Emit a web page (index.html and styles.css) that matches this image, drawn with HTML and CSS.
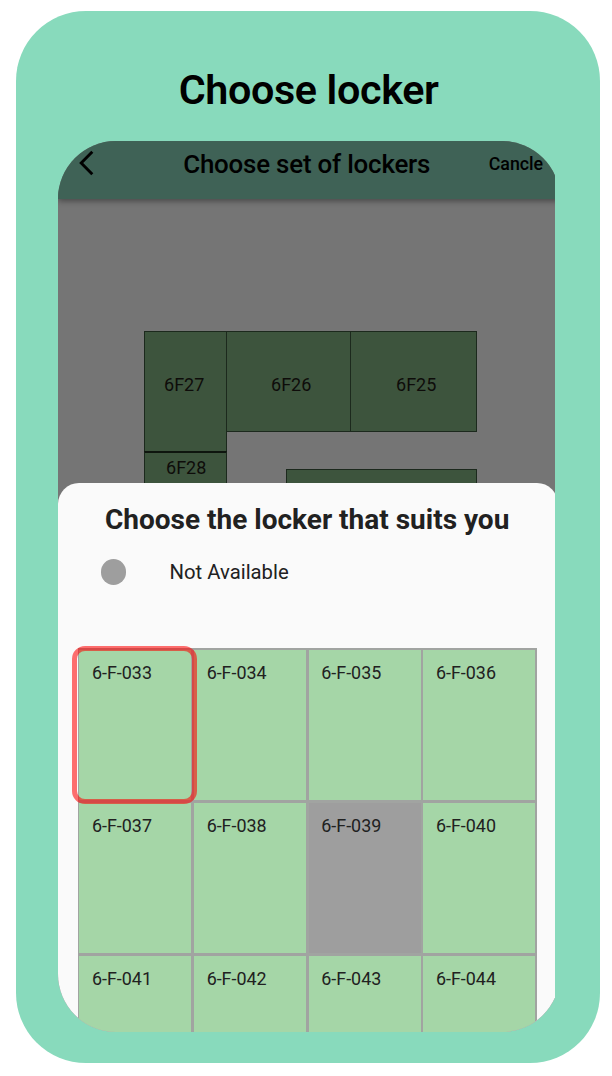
FILE: index.html
```html
<!DOCTYPE html>
<html lang="en">
<head>
<meta charset="utf-8">
<title>Choose locker</title>
<link rel="stylesheet" href="styles.css">
</head>
<body>
<main class="card">
  <h1 class="card-title">Choose locker</h1>
  <div class="viewport">
    <div class="screen">
      <header class="app-bar">
        <svg class="back" viewBox="0 0 18 26" aria-label="Back"><path d="M15.3 1.8 4.2 13l11.1 11.2" fill="none" stroke="#000" stroke-width="2.9"/></svg>
        <span class="app-title">Choose set of lockers</span>
        <span class="cancel">Cancle</span>
      </header>
      <section class="map">
        <div class="unit u27"><span>6F27</span></div>
        <div class="unit u26"><span>6F26</span></div>
        <div class="unit u25"><span>6F25</span></div>
        <div class="unit u28"><span>6F28</span></div>
        <div class="unit u29"></div>
      </section>
      <section class="sheet">
        <h2 class="sheet-title">Choose the locker that suits you</h2>
        <div class="legend"><i class="dot"></i><span>Not Available</span></div>
        <div class="lockers">
          <div class="locker selected"><span>6-F-033</span></div>
          <div class="locker"><span>6-F-034</span></div>
          <div class="locker"><span>6-F-035</span></div>
          <div class="locker"><span>6-F-036</span></div>
          <div class="locker"><span>6-F-037</span></div>
          <div class="locker"><span>6-F-038</span></div>
          <div class="locker taken"><span>6-F-039</span></div>
          <div class="locker"><span>6-F-040</span></div>
          <div class="locker"><span>6-F-041</span></div>
          <div class="locker"><span>6-F-042</span></div>
          <div class="locker"><span>6-F-043</span></div>
          <div class="locker"><span>6-F-044</span></div>
        </div>
      </section>
    </div>
  </div>
</main>
</body>
</html>
```
FILE: styles.css
```css
*, *::after { box-sizing: border-box; }
html { background: #fff; }
body {
  margin: 0;
  height: 1076px;
  padding: 11.4px 0 0 16.4px;
  overflow: hidden;
  font-family: Roboto, sans-serif;
  color: #000;
}
.card {
  width: 584px;
  height: 1051.3px;
  padding-left: 41.3px;
  border-radius: 70px;
  background: #88dabc;
}
.card-title {
  margin: 0;
  height: 129.2px;
  padding: 54px 0 0 121px;
  font-size: 41.3px;
  line-height: 50px;
  font-weight: 600;
  letter-spacing: -0.37px;
  white-space: nowrap;
}
.viewport {
  width: 497.3px;
  height: 891px;
  overflow: hidden;
}
.screen {
  display: flex;
  flex-direction: column;
  width: 502px;
  height: 891px;
  border-radius: 58px;
  overflow: hidden;
  background: #757575;
}
.app-bar {
  display: flex;
  flex: none;
  position: relative;
  z-index: 1;
  height: 58.2px;
  padding-top: 8.3px;
  background: #3f6256;
  box-shadow: 0 2px 6px rgba(0, 0, 0, .4);
  white-space: nowrap;
}
.back { flex: none; width: 18px; height: 26px; margin-left: 19px; margin-top: 1.2px; }
.app-title {
  width: 306px;
  padding-left: 88.5px;
  font-size: 25.9px;
  line-height: 30px;
  font-weight: 500;
  letter-spacing: -0.2px;
}
.cancel {
  padding-left: 88px;
  font-size: 17.8px;
  line-height: 29px;
  font-weight: 500;
}
.map {
  flex: none;
  position: relative;
  height: 284.3px;
}
.unit {
  position: absolute;
  display: flex;
  justify-content: center;
  border: 1px solid #1c291d;
  background: #3d543d;
  color: #0e0c0a;
  font-size: 18px;
  line-height: 22px;
}
.u27 { left: 86px; top: 132.3px; width: 83px; height: 121px; padding: 42px 2px 0 0; }
.u26 { left: 168px; top: 132.3px; width: 125px; height: 101px; padding: 42px 0 0 6px; }
.u25 { left: 292px; top: 132.3px; width: 127px; height: 101px; padding: 42px 0 0 6px; }
.u28 { left: 86px; top: 252.3px; width: 83px; height: 60px; padding: 4px 0 0 2px; border-top: 2px solid #0e150e; }
.u29 { left: 228px; top: 270.3px; width: 191px; height: 50px; }
.sheet {
  flex: none;
  position: relative;
  z-index: 2;
  width: 500.3px;
  height: 560px;
  padding-left: 20.3px;
  border-radius: 21px 21px 0 0;
  background: #fafafa;
  color: #212121;
}
.sheet-title {
  margin: 0;
  padding: 20px 0 0 27px;
  font-size: 28px;
  line-height: 34px;
  font-weight: 700;
  white-space: nowrap;
}
.legend {
  display: flex;
  align-items: center;
  height: 26px;
  margin-top: 22px;
  padding-left: 22.7px;
  gap: 43.3px;
  font-size: 20.3px;
}
.dot { width: 25.6px; height: 25.6px; border-radius: 50%; background: #9e9e9e; }
.lockers {
  display: grid;
  grid-template-columns: repeat(4, 112px);
  grid-auto-rows: 150px;
  gap: 3px 2.67px;
  width: 458.7px;
  margin-top: 63.4px;
  padding: 1.3px;
  background: #a1a4a1;
}
.locker {
  position: relative;
  padding: 11.3px 0 0 12.7px;
  background: #a5d6a7;
  font-size: 17.9px;
  line-height: 23px;
}
.taken { background: #9e9e9e; }
.selected::after {
  content: "";
  position: absolute;
  z-index: 1;
  left: -7px;
  top: -4px;
  width: 125px;
  height: 158px;
  border: 5px solid rgba(255, 0, 0, .56);
  border-radius: 13px;
}
```
